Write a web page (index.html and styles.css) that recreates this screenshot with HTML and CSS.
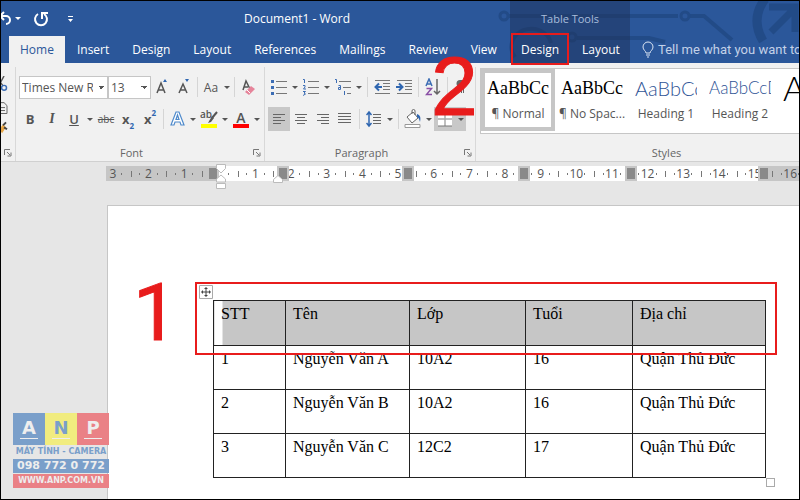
FILE: index.html
```
<!DOCTYPE html>
<html lang="vi">
<head>
  <meta charset="UTF-8">
  <meta name="viewport" content="width=device-width, initial-scale=1.0">
  <title>Document1 - Word</title>
  <link rel="stylesheet" href="styles.css">
</head>
<body>
  <div class="app">
    <header class="header">
      <svg class="circuit" width="310" height="62" viewBox="0 0 310 62" fill="none" stroke="#1f4680" stroke-width="4" opacity=".7">
        <circle cx="9" cy="15" r="4" stroke-width="3"/>
        <path d="M13 15h170M195 15h14l28 24M82 37h72l16 4M20 56a20 18 0 1 1 36-14"/>
        <circle cx="77" cy="36" r="4" stroke-width="3"/>
        <circle cx="190" cy="15" r="4" stroke-width="3"/>
        <path d="M270-2q-15 20-2 42" stroke-width="9"/>
        <path d="M276 31l22-22M274 6h26v25" stroke-width="7"/>
      </svg>

      <div class="main-bar">
        <div class="title-row">
          <div class="quick-access">
            <button class="qa-btn" aria-label="Undo">
              <svg width="16" height="16" viewBox="0 0 16 16" fill="none" stroke="#fff" stroke-width="2"><path d="M7 1L3 5l4 4M3 5h6a4 4 0 0 1 0 8"/></svg>
            </button>
            <button class="caret light" aria-label="Undo list"></button>
            <button class="qa-btn redo" aria-label="Redo">
              <svg width="16" height="16" viewBox="0 0 16 16" fill="none" stroke="#fff" stroke-width="2"><path d="M5 3a6 6 0 1 0 6 0M9 8V2h6"/></svg>
            </button>
            <button class="qa-btn customize" aria-label="Customize">
              <svg width="8" height="10" viewBox="0 0 8 10" fill="#fff"><path d="M1 2h5v1H1zM1 5h5L3.500 8z"/></svg>
            </button>
          </div>
          <span class="doc-title">Document1 - Word</span>
        </div>
        <nav class="tabs">
          <button class="tab active">Home</button>
          <button class="tab">Insert</button>
          <button class="tab">Design</button>
          <button class="tab">Layout</button>
          <button class="tab">References</button>
          <button class="tab">Mailings</button>
          <button class="tab">Review</button>
          <button class="tab">View</button>
        </nav>
      </div>

      <div class="context-bar">
        <span class="context-title">Table Tools</span>
        <nav class="tabs">
          <button class="tab marked">Design</button>
          <button class="tab">Layout</button>
        </nav>
      </div>

      <div class="tell-me">
        <svg width="12" height="18" viewBox="0 0 12 18" fill="none" stroke="#dbe5f3"><path d="M4 12c0-2-3-3-3-6a5 5 0 0 1 10 0c0 3-3 4-3 6zM4 14h4M5 16h2"/></svg>
        <span>Tell me what you want to</span>
      </div>
    </header>

    <div class="ribbon">
      <section class="group clipboard">
        <svg width="12" height="60" viewBox="0 0 12 60" fill="none">
          <path d="M3 0L-2 9M-4 2l6 8" stroke="#555" stroke-width="1.500"/>
          <circle cx="3" cy="12" r="2.500" stroke="#3c6db4" stroke-width="1.500"/>
          <path d="M-3 27h6l3 3v8h-9zM-1 32h5M-1 35h5" stroke="#666"/>
          <path d="M-2 54l4-5 3 3-4 6z" fill="#e9a849"/>
          <path d="M2 50l3-3M3 52l3 2" stroke="#444" stroke-width="2"/>
        </svg>
        <div class="group-label"><button class="launcher" aria-label="Clipboard settings"><svg width="8" height="8" viewBox="0 0 8 8" fill="none" stroke="#777"><path d="M.5 6V.5H6M3 3l3 3M7 3.500V7H3.500"/></svg></button></div>
      </section>

      <section class="group font">
        <div class="tool-row">
          <select class="combo font-name" aria-label="Font"><option>Times New Roman</option></select>
          <select class="combo font-size" aria-label="Font size"><option>13</option></select>
          <button class="tool" aria-label="Grow font"><svg width="16" height="18" viewBox="0 0 16 18"><path d="M3 15L7 5l4 10M4.500 12h5" fill="none" stroke="#555" stroke-width="1.500"/><path d="M9 4l2-3 2 3z" fill="#2f66b0"/></svg></button>
          <button class="tool" aria-label="Shrink font"><svg width="16" height="18" viewBox="0 0 16 18"><path d="M3 15L7 6l4 9M4.500 12h5" fill="none" stroke="#555" stroke-width="1.500"/><path d="M9 1h4l-2 3z" fill="#2f66b0"/></svg></button>
          <span class="sep"></span>
          <button class="tool">Aa</button>
          <button class="caret" aria-label="Change case"></button>
          <span class="sep"></span>
          <button class="tool" aria-label="Clear formatting"><svg width="16" height="18" viewBox="0 0 16 18"><path d="M3 12L6 3l4 8M4 9h4" fill="none" stroke="#555" stroke-width="1.500"/><path d="M5 14l6-6 4 3-6 6z" fill="#e6849a"/><path d="M7 12l3 3" stroke="#fff"/></svg></button>
        </div>
        <div class="tool-row">
          <button class="tool bold">B</button>
          <button class="tool italic">I</button>
          <button class="tool underline">U</button>
          <button class="caret" aria-label="Underline style"></button>
          <button class="tool strike">abc</button>
          <button class="tool script">x<sub>2</sub></button>
          <button class="tool script">x<sup>2</sup></button>
          <span class="sep"></span>
          <button class="tool" aria-label="Text effects"><svg width="16" height="18" viewBox="0 0 16 18" fill="#fff" stroke="#4f8acb" stroke-width="1.200"><path d="M2 15L7 2h3l5 13h-3l-1-3H6l-1 3zM7 9.500h3L8.500 5z"/></svg></button>
          <button class="caret" aria-label="Text effects list"></button>
          <button class="tool swatch yellow" aria-label="Highlight"><span class="ab">ab</span><svg class="pen" width="10" height="12" viewBox="0 0 10 12"><path d="M9 1L4 7" stroke="#555" stroke-width="2"/><path d="M4 5l2 2-3 4-3 1z" fill="#555"/></svg></button>
          <button class="caret" aria-label="Highlight colors"></button>
          <button class="tool swatch red" aria-label="Font color">A</button>
          <button class="caret" aria-label="Font colors"></button>
        </div>
        <div class="group-label">Font<button class="launcher" aria-label="Font settings"><svg width="8" height="8" viewBox="0 0 8 8" fill="none" stroke="#777"><path d="M.5 6V.5H6M3 3l3 3M7 3.500V7H3.500"/></svg></button></div>
      </section>

      <section class="group paragraph">
        <div class="tool-row">
          <button class="tool" aria-label="Bullets"><svg width="16" height="18" viewBox="0 0 16 18"><path d="M5 3.500h11M5 9.500h11M5 15.500h11" stroke="#777"/><path d="M0 2h3v3H0zM0 8h3v3H0zM0 14h3v3H0z" fill="#3c6db4"/></svg></button>
          <button class="caret" aria-label="Bullet list"></button>
          <button class="tool" aria-label="Numbering"><svg width="16" height="18" viewBox="0 0 16 18" fill="none"><path d="M5 3.500h11M5 9.500h11M5 15.500h11" stroke="#777"/><path d="M0 1.500h1.500V5M0 7.500h2v1.500L.5 11H3M0 13.500h2.500L1 15l1.500 1L0 17.500" stroke="#3c6db4"/></svg></button>
          <button class="caret" aria-label="Number list"></button>
          <button class="tool" aria-label="Multilevel list"><svg width="16" height="18" viewBox="0 0 16 18" fill="none"><path d="M4 3.500h12M8 9.500h8M12 15.500h4" stroke="#777"/><path d="M0 1.500h1.500V5M3.500 7.500h2v4h-2v-2h2M9.500 13v4" stroke="#3c6db4"/></svg></button>
          <button class="caret" aria-label="Multilevel styles"></button>
          <span class="sep"></span>
          <button class="tool" aria-label="Decrease indent"><svg width="16" height="18" viewBox="0 0 16 18" fill="none"><path d="M1 2.500h15M9 5.500h7M9 8.500h7M9 11.500h7M1 15.500h15" stroke="#777"/><path d="M8 9H2M5 5.500L1.500 9 5 12.500" stroke="#2f66b0" stroke-width="2"/></svg></button>
          <button class="tool" aria-label="Increase indent"><svg width="16" height="18" viewBox="0 0 16 18" fill="none"><path d="M1 2.500h15M9 5.500h7M9 8.500h7M9 11.500h7M1 15.500h15" stroke="#777"/><path d="M0 9h6M3 5.500L6.500 9 3 12.500" stroke="#2f66b0" stroke-width="2"/></svg></button>
          <span class="sep"></span>
          <button class="tool" aria-label="Sort"><svg width="16" height="18" viewBox="0 0 16 18" fill="none" stroke-width="1.500"><path d="M1 8l3-7 3 7M2 6h4" stroke="#3c6db4"/><path d="M1.500 10.500h5l-5 6h5.500" stroke="#8a4fa5"/><path d="M12 1v15M9 13l3 3 3-3" stroke="#666"/></svg></button>
          <span class="sep"></span>
          <button class="tool" aria-label="Show marks"><svg width="16" height="18" viewBox="0 0 16 18"><path d="M11 2H6a3 3 0 0 0 0 7h1v6h1V3h1v12h1V3h1z" fill="#666"/></svg></button>
        </div>
        <div class="tool-row">
          <button class="tool pressed" aria-label="Align left"><svg width="16" height="18" viewBox="0 0 16 18"><path d="M2 4.500h12M2 7.500h8M2 10.500h12M2 13.500h8" stroke="#666"/></svg></button>
          <button class="tool" aria-label="Center"><svg width="16" height="18" viewBox="0 0 16 18"><path d="M2 4.500h12M4 7.500h8M2 10.500h12M4 13.500h8" stroke="#666"/></svg></button>
          <button class="tool" aria-label="Align right"><svg width="16" height="18" viewBox="0 0 16 18"><path d="M2 4.500h12M6 7.500h8M2 10.500h12M6 13.500h8" stroke="#666"/></svg></button>
          <button class="tool" aria-label="Justify"><svg width="16" height="18" viewBox="0 0 16 18"><path d="M1 3.500h13M1 6.500h13M1 9.500h13M1 12.500h13" stroke="#666"/></svg></button>
          <span class="sep"></span>
          <button class="tool" aria-label="Line spacing"><svg width="16" height="18" viewBox="0 0 16 18" fill="none"><path d="M7 4.500h8M7 7.500h8M7 10.500h8M7 13.500h8" stroke="#666"/><path d="M3 2v14M.5 5L3 2l2.500 3M.5 13L3 16l2.500-3" stroke="#2f66b0" stroke-width="1.500"/></svg></button>
          <button class="caret" aria-label="Line spacing list"></button>
          <span class="sep"></span>
          <button class="tool" aria-label="Shading"><svg width="18" height="20" viewBox="0 0 18 20" fill="#fff" stroke="#666"><path d="M3 8l6-5 5 6-6 5zM8 5V2a1.500 1.500 0 0 1 3 0v4"/><path d="M13 5c3 1 4 3 3 8-1-3-1-4-3-5z" fill="#2f66b0" stroke="none"/><path d="M1 15.500h15v3H1z" stroke="#999"/></svg></button>
          <button class="caret" aria-label="Shading colors"></button>
          <button class="tool pressed" aria-label="Borders"><svg width="16" height="16" viewBox="0 0 16 16"><path d="M1 1h14v14H1z" fill="#fff"/><path d="M8 1v14M1 8h14" stroke="#aaa" stroke-width="1.500"/><path d="M1 15h14" stroke="#777"/></svg></button>
          <button class="caret pressed" aria-label="Border list"></button>
        </div>
        <div class="group-label">Paragraph<button class="launcher" aria-label="Paragraph settings"><svg width="8" height="8" viewBox="0 0 8 8" fill="none" stroke="#777"><path d="M.5 6V.5H6M3 3l3 3M7 3.500V7H3.500"/></svg></button></div>
      </section>

      <section class="group styles">
        <div class="gallery">
          <button class="style-card selected"><span class="preview">AaBbCc</span><span class="style-name">¶ Normal</span></button>
          <button class="style-card"><span class="preview">AaBbCc</span><span class="style-name">¶ No Spac...</span></button>
          <button class="style-card"><span class="preview heading1">AaBbCc</span><span class="style-name">Heading 1</span></button>
          <button class="style-card"><span class="preview heading2">AaBbCcD</span><span class="style-name">Heading 2</span></button>
          <button class="style-card last"><span class="preview title">A</span></button>
        </div>
        <div class="group-label">Styles</div>
      </section>
    </div>

    <div class="ruler-zone">
      <div class="ruler">
        <div class="scale">
          <span>3</span><span>2</span><span>1</span><span></span>
          <span>1</span><span>2</span><span>3</span><span>4</span><span>5</span><span>6</span><span>7</span><span>8</span>
          <span>9</span><span>10</span><span>11</span><span>12</span><span>13</span><span>14</span><span>15</span><span>16</span>
        </div>
        <i class="col-mark c0"></i>
        <i class="col-mark c1"></i>
        <i class="col-mark c2"></i>
        <i class="col-mark c3"></i>
        <i class="col-mark c4"></i>
        <i class="col-mark c5"></i>
        <svg class="indent first" width="10" height="26" viewBox="0 0 10 26" fill="#fff" stroke="#bbb"><path d="M.5.5h9v4L5 9 .5 4.500zM5 11l4.500 4v3h-9v-3zM.5 19.500h9v5h-9z"/></svg>
        <svg class="indent right" width="10" height="8" viewBox="0 0 10 8" fill="#fff" stroke="#bbb"><path d="M5 .5l4.500 4v3h-9v-3z"/></svg>
      </div>
    </div>

    <main class="workspace">
      <div class="page">
        <div class="table-wrap">
          <table class="doc-table">
            <colgroup><col class="w-stt"><col class="w-name"><col class="w-class"><col class="w-age"><col></colgroup>
            <thead>
              <tr><th>STT</th><th>Tên</th><th>Lớp</th><th>Tuổi</th><th>Địa chỉ</th></tr>
            </thead>
            <tbody>
              <tr><td>1</td><td>Nguyễn Văn A</td><td>10A2</td><td>16</td><td>Quận Thủ Đức</td></tr>
              <tr><td>2</td><td>Nguyễn Văn B</td><td>10A2</td><td>16</td><td>Quận Thủ Đức</td></tr>
              <tr><td>3</td><td>Nguyễn Văn C</td><td>12C2</td><td>17</td><td>Quận Thủ Đức</td></tr>
            </tbody>
          </table>
          <svg class="move-handle" width="14" height="14" viewBox="0 0 14 14" fill="none"><path d="M.5.5h13v13H.5z" fill="#fff" stroke="#aaa"/><path d="M7 3v8M3 7h8" stroke="#444"/><path d="M7 2l2 2H5zM7 12l2-2H5zM2 7l2-2v4zM12 7l-2-2v4z" fill="#444"/></svg>
          <i class="resize-handle"></i>
          <div class="row-frame"></div>
        </div>
      </div>
    </main>

    <div class="logo">
      <div class="logo-letters"><span>A</span><span>N</span><span>P</span></div>
      <div class="logo-tagline">MÁY TÍNH - CAMERA</div>
      <div class="logo-phone">098 772 0 772</div>
      <div class="logo-site">WWW.ANP.COM.VN</div>
    </div>

    <span class="step step-one">1</span>
    <span class="step step-two">2</span>
  </div>
</body>
</html>
```

FILE: styles.css
```
* {
  margin: 0;
  padding: 0;
  box-sizing: border-box;
}

body {
  font-family: "Open Sans", "Noto Sans", sans-serif;
  font-size: 12px;
  color: #555;
  background: #e6e6e6;
}

button {
  font: inherit;
  color: inherit;
  border: none;
  background: none;
}

.app {
  position: relative;
  display: flex;
  flex-direction: column;
  min-height: 100vh;
  border: 1px solid #000;
  overflow: hidden;
}

/* header */
.header {
  position: relative;
  display: flex;
  height: 62px;
  background: #2b579a;
  color: #fff;
}

.circuit {
  position: absolute;
  top: 0;
  left: 494px;
}

.main-bar {
  flex: 0 0 509px;
  min-width: 0;
}

.context-bar {
  flex: 0 0 120px;
  min-width: 0;
  background: rgba(30, 50, 90, 0.5);
}

.main-bar,
.context-bar {
  position: relative;
  display: flex;
  flex-direction: column;
}

.title-row {
  display: flex;
  align-items: center;
  height: 35px;
}

.quick-access {
  display: flex;
  align-items: center;
  flex: 0 0 243px;
  height: 32px;
}

.qa-btn {
  display: flex;
}

.quick-access .qa-btn:first-child {
  margin-left: -4px;
}

.qa-btn.redo {
  margin-left: 10px;
}

.qa-btn.customize {
  margin-left: 18px;
}

.quick-access .caret {
  height: 3px;
}

.context-title {
  height: 35px;
  font-size: 11px;
  line-height: 35px;
  text-align: center;
  color: #a9bddb;
}

.tabs {
  display: flex;
  gap: 1px;
  height: 27px;
}

.main-bar .tabs {
  padding-left: 8px;
}

.tab {
  padding: 0 11px;
}

.tab.active {
  background: #f1f1f1;
  color: #2b579a;
}

.tab.marked {
  position: relative;
}

.tab.marked::after {
  content: '';
  position: absolute;
  inset: -3px 1px -2px;
  border: 2px solid #e81c1c;
}

.tell-me {
  position: relative;
  display: flex;
  align-items: center;
  align-self: flex-end;
  gap: 4px;
  height: 27px;
  padding-left: 12px;
  font-family: Roboto, sans-serif;
  font-size: 13px;
  color: #c3d1e8;
  white-space: nowrap;
}

/* ribbon */
.ribbon {
  display: flex;
  height: 99px;
  padding-top: 4px;
  background: #f1f1f1;
  border-bottom: 1px solid #d0d0d0;
}

.group {
  display: flex;
  flex-direction: column;
  gap: 10px;
  min-width: 0;
  padding-top: 9px;
  border-right: 1px solid #d8d8d8;
}

.clipboard {
  flex: 0 0 15px;
}

.font {
  flex: 0 0 249px;
  padding-left: 3px;
}

.paragraph {
  flex: 0 0 211px;
  padding-left: 3px;
}

.styles {
  flex: 1;
  padding: 1px 0 0 4px;
  border-right: none;
}

.group-label {
  position: relative;
  margin-top: auto;
  padding-right: 20px;
  font-size: 11px;
  line-height: 16px;
  text-align: center;
  color: #666;
}

.styles .group-label {
  padding: 0 0 0 54px;
}

.clipboard .group-label {
  height: 16px;
  padding: 0;
}

.launcher {
  position: absolute;
  right: 3px;
  bottom: 4px;
  display: flex;
}

.tool-row {
  display: flex;
  align-items: center;
  height: 22px;
}

.tool {
  display: flex;
  flex: 0 0 22px;
  align-items: center;
  justify-content: center;
  height: 24px;
}

.caret {
  flex: 0 0 10px;
  height: 24px;
}

.caret::before {
  content: '';
  display: block;
  width: 0;
  margin: 0 auto;
  border: 3px solid transparent;
  border-top-color: #555;
  border-bottom: none;
}

.caret.light::before {
  border-top-color: #fff;
}

.pressed {
  background: #c8c8c8;
}

.sep {
  flex: 0 0 1px;
  height: 20px;
  margin: 0 2px;
  background: #d5d5d5;
}

.paragraph .sep {
  margin: 0 3px;
}

.combo {
  min-width: 0;
  height: 23px;
  padding: 0 14px 0 2px;
  border: 1px solid #c6c6c6;
  border-radius: 0;
  appearance: none;
  font: inherit;
  color: #555;
  background:
    linear-gradient(45deg, transparent 50%, #555 50%) no-repeat right 6px center / 3px 3px,
    linear-gradient(315deg, transparent 50%, #555 50%) no-repeat right 3px center / 3px 3px,
    #fff;
}

.font-name {
  flex: 0 0 89px;
}

.font-size {
  flex: 0 0 43px;
}

.bold {
  font-size: 13px;
  font-weight: bold;
}

.italic {
  font: italic bold 14px "Liberation Serif", serif;
}

.underline {
  font-size: 13px;
  font-weight: 600;
  text-decoration: underline;
}

.strike {
  font-size: 10px;
  text-decoration: line-through;
}

.script {
  font-size: 13px;
  font-weight: bold;
}

.script sub,
.script sup {
  font-size: 8px;
  color: #2f66b0;
}

.script sub {
  align-self: flex-end;
}

.script sup {
  align-self: flex-start;
}

.swatch {
  position: relative;
  padding-bottom: 4px;
  font-size: 14px;
  font-weight: 600;
}

.swatch::after {
  content: '';
  position: absolute;
  left: 3px;
  right: 3px;
  bottom: 3px;
  height: 4px;
}

.swatch.yellow::after {
  background: #ff0;
}

.swatch.red::after {
  background: #f00;
}

.ab {
  align-self: flex-start;
  font-size: 10px;
}

.pen {
  margin-left: -4px;
}

/* style gallery */
.gallery {
  display: flex;
  height: 66px;
  background: #fff;
  border: 1px solid #c6c6c6;
  border-right: none;
  overflow: hidden;
}

.style-card {
  display: flex;
  flex: 0 0 74px;
  flex-direction: column;
  justify-content: center;
  align-items: center;
  height: 62px;
  overflow: hidden;
  white-space: nowrap;
}

.style-card.selected {
  border: 4px solid #c6c6c6;
}

.style-card.last {
  flex: 1;
  align-items: flex-start;
  min-width: 0;
}

.preview {
  height: 28px;
  font: 18px/28px "Liberation Serif", serif;
  color: #000;
}

.heading1,
.heading2 {
  width: 62px;
  overflow: hidden;
  text-align: left;
  font-family: Lato, sans-serif;
  font-weight: 300;
  color: #2f5496;
}

.heading1 {
  font-size: 20px;
}

.heading2 {
  font-size: 17px;
}

.title {
  height: 40px;
  padding-left: 6px;
  margin-bottom: 24px;
  font: 300 34px/40px Lato, sans-serif;
}

.style-name {
  line-height: 24px;
}

/* ruler */
.ruler-zone {
  height: 43px;
  padding: 4px 0 0 105px;
}

.ruler {
  position: relative;
  height: 15px;
  background: linear-gradient(90deg, #c6c6c6 112px, #fff 112px, #fff 657px, #c6c6c6 657px);
}

.scale {
  display: grid;
  grid-template-columns: repeat(20, 1fr);
  height: 15px;
  margin: 0 -9px 0 -11px;
  clip-path: inset(0 0 0 11px);
}

.scale span {
  text-align: center;
  font-size: 12px;
  line-height: 15px;
  background:
    linear-gradient(#777, #777) no-repeat 0 center / 1px 6px,
    linear-gradient(#777, #777) no-repeat 25% center / 1px 2px,
    linear-gradient(#777, #777) no-repeat 75% center / 1px 2px;
}

.col-mark {
  position: absolute;
  top: 0;
  width: 12px;
  height: 15px;
  background: #8a8a8a;
  border: 2px solid #c6c6c6;
}

.c0 { left: 101px; }
.c1 { left: 171px; }
.c2 { left: 296px; }
.c3 { left: 412px; }
.c4 { left: 519px; }
.c5 { left: 652px; }

.indent {
  position: absolute;
}

.indent.first {
  top: -2px;
  left: 110px;
}

.indent.right {
  top: 9px;
  left: 167px;
}

/* document */
.workspace {
  display: flex;
  flex: 1;
  padding-left: 106px;
}

.page {
  flex: 1;
  padding: 94px 33px 12px 105px;
  background: #fff;
  border: solid #c6c6c6;
  border-width: 1px 0 0 1px;
}

.table-wrap {
  position: relative;
}

.doc-table {
  width: 100%;
  table-layout: fixed;
  border-collapse: collapse;
  font: 16px/24px "Liberation Serif", serif;
  color: #000;
}

.w-stt { width: 72px; }
.w-name { width: 124px; }
.w-class { width: 116px; }
.w-age { width: 107px; }

.doc-table th,
.doc-table td {
  height: 44px;
  padding: 1px 7px;
  border: 1px solid #222;
  text-align: left;
  vertical-align: top;
  font-weight: normal;
}

.doc-table th {
  height: 45px;
  background: #c6c6c6;
}

.doc-table th:first-child {
  background: linear-gradient(90deg, #fff 8px, #c6c6c6 8px);
}

.move-handle {
  position: absolute;
  top: -15px;
  left: -14px;
}

.resize-handle {
  position: absolute;
  right: -9px;
  bottom: -9px;
  width: 9px;
  height: 9px;
  background: #fff;
  border: 1px solid #aaa;
}

.row-frame {
  position: absolute;
  top: -18px;
  left: -18px;
  right: -11px;
  height: 73px;
  border: 2px solid #e81c1c;
}

/* watermark logo */
.logo {
  position: absolute;
  left: 12px;
  bottom: 11px;
  width: 96px;
  font-family: "DejaVu Sans", sans-serif;
  font-weight: bold;
  text-align: center;
  white-space: nowrap;
  color: #eee;
}

.logo-letters {
  display: grid;
  grid-template-columns: repeat(3, 1fr);
}

.logo-letters span {
  height: 32px;
  font-size: 18px;
  line-height: 30px;
  background: linear-gradient(#eee, #eee) no-repeat center 25px / 18px 1px #7a9fca;
}

.logo-letters span:nth-child(2) {
  color: #7a9fca;
  background-color: #f1ec7f;
}

.logo-letters span:nth-child(3) {
  background-color: #ea8186;
}

.logo-tagline {
  font-size: 8px;
  line-height: 14px;
  color: #7a9fca;
}

.logo-phone {
  font-size: 11px;
  line-height: 14px;
  background: #7a9fca;
}

.logo-site {
  margin-top: 1px;
  font-size: 8px;
  line-height: 14px;
  background: #ea8186;
}

/* step numbers */
.step {
  position: absolute;
  line-height: 84px;
  color: #e81c1c;
  -webkit-text-stroke: 1px #e81c1c;
}

.step-one {
  top: 270px;
  left: 132px;
  font-family: Roboto, sans-serif;
  font-size: 80px;
}

.step-two {
  top: 43px;
  left: 430px;
  font-family: "Liberation Sans", sans-serif;
  font-size: 84px;
}
```
